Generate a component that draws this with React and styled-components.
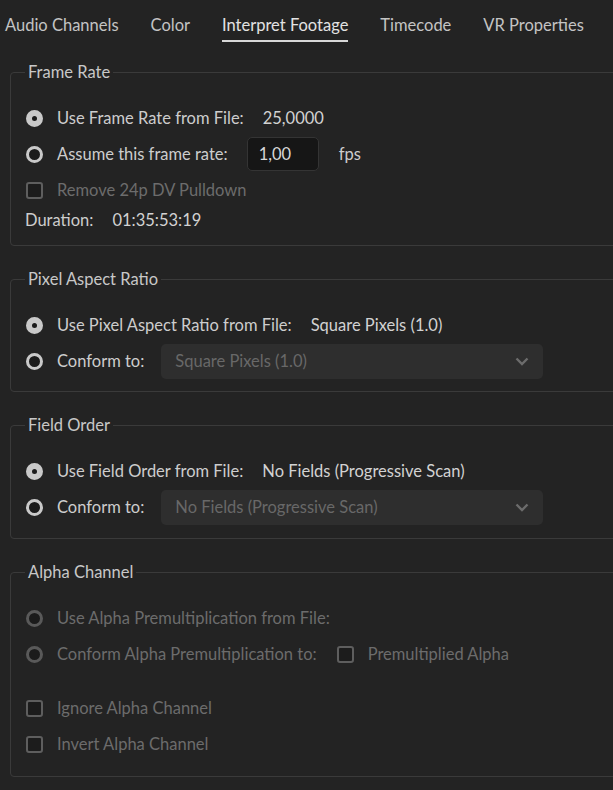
import React from "react";
import styled, { createGlobalStyle } from "styled-components";

const Global = createGlobalStyle`
  html, body { margin: 0; padding: 0; background: #232323; overflow: hidden; }
  body { font-family: Lato, "Noto Sans", sans-serif; font-size: 16.5px; color: #cdcdcd; }
  * { box-sizing: border-box; }
`;

const Page = styled.div`
  width: 613px;
  height: 790px;
  background: #232323;
  overflow: hidden;
`;

const TabBar = styled.nav`
  display: flex;
  gap: 32px;
  padding-left: 5px;
  height: 42px;
`;

const Tab = styled.div`
  padding-top: 15px;
  line-height: 20px;
  height: 42px;
  color: ${(p) => (p.$active ? "#e2e2e2" : "#c4c4c4")};
  border-bottom: 2px solid ${(p) => (p.$active ? "#d8d8d8" : "transparent")};
  white-space: nowrap;
`;

const Group = styled.fieldset`
  margin: ${(p) => (p.$first ? "20px" : "23px")} -20px 0 10px;
  padding: 18px 0 ${(p) => p.$pb || 13}px 14px;
  border: 1px solid #3a3a3a;
  border-radius: 4px;
  min-width: 0;
`;

const Legend = styled.legend`
  padding: 0 3px;
  line-height: 20px;
  color: #c8c8c8;
  margin-left: 0;
`;

const Row = styled.div`
  display: flex;
  align-items: center;
  height: ${(p) => p.$h || 36}px;
  margin-top: ${(p) => p.$mt || 0}px;
  gap: 19px;
  white-space: nowrap;
`;

const Option = styled.label`
  display: flex;
  align-items: center;
  gap: 14px;
  padding-left: 1px;
  color: ${(p) => (p.$disabled ? "#6c6c6c" : "#cdcdcd")};
`;

const Radio = styled.span`
  width: 17px;
  height: 17px;
  border-radius: 50%;
  flex: none;
  display: flex;
  align-items: center;
  justify-content: center;
  background: ${(p) => (p.$checked ? "#c9c9c9" : "#1b1b1b")};
  border: 3px solid ${(p) => (p.$disabled ? "#595959" : "#c9c9c9")};
  &::after {
    content: "";
    display: ${(p) => (p.$checked ? "block" : "none")};
    width: 5px;
    height: 5px;
    border-radius: 50%;
    background: #1b1b1b;
  }
`;

const Check = styled.span`
  width: 17px;
  height: 17px;
  flex: none;
  border-radius: 3px;
  border: 2px solid #5e5e5e;
  background: #1c1c1c;
`;

const Value = styled.span`
  color: #d2d2d2;
`;

const Plain = styled.span`
  color: #cdcdcd;
`;

const NumInput = styled.div`
  width: 72px;
  height: 34px;
  background: #161616;
  border: 1px solid #343434;
  border-radius: 5px;
  padding-left: 11px;
  display: flex;
  align-items: center;
  color: #d8d8d8;
`;

const Unit = styled.span`
  margin-left: 1px;
  color: #cdcdcd;
`;

const Select = styled.div`
  width: 382px;
  height: 35px;
  margin-left: -2px;
  background: #2e2e2e;
  border-radius: 5px;
  padding: 0 14px;
  display: flex;
  align-items: center;
  justify-content: space-between;
  color: #686868;
`;

const Inline = styled.label`
  display: flex;
  align-items: center;
  gap: 14px;
  margin-left: 1px;
  color: #6c6c6c;
`;

const Chevron = () => (
  <svg width="14" height="9" viewBox="0 0 14 9">
    <polyline points="1.5,1.5 7,7 12.5,1.5" fill="none" stroke="#6c6c6c" strokeWidth="2.4" />
  </svg>
);

export default function App() {
  return (
    <Page>
      <Global />
      <TabBar>
        <Tab>Audio Channels</Tab>
        <Tab>Color</Tab>
        <Tab $active>Interpret Footage</Tab>
        <Tab>Timecode</Tab>
        <Tab>VR Properties</Tab>
      </TabBar>

      <Group $first>
        <Legend>Frame Rate</Legend>
        <Row>
          <Option>
            <Radio $checked />
            Use Frame Rate from File:
          </Option>
          <Value>25,0000</Value>
        </Row>
        <Row>
          <Option>
            <Radio />
            Assume this frame rate:
          </Option>
          <NumInput>1,00</NumInput>
          <Unit>fps</Unit>
        </Row>
        <Row>
          <Option $disabled>
            <Check />
            Remove 24p DV Pulldown
          </Option>
        </Row>
        <Row $h={24}>
          <Plain>Duration:</Plain>
          <Value>01:35:53:19</Value>
        </Row>
      </Group>

      <Group $pb={12}>
        <Legend>Pixel Aspect Ratio</Legend>
        <Row>
          <Option>
            <Radio $checked />
            Use Pixel Aspect Ratio from File:
          </Option>
          <Value>Square Pixels (1.0)</Value>
        </Row>
        <Row>
          <Option>
            <Radio />
            Conform to:
          </Option>
          <Select>
            Square Pixels (1.0)
            <Chevron />
          </Select>
        </Row>
      </Group>

      <Group>
        <Legend>Field Order</Legend>
        <Row>
          <Option>
            <Radio $checked />
            Use Field Order from File:
          </Option>
          <Value>No Fields (Progressive Scan)</Value>
        </Row>
        <Row>
          <Option>
            <Radio />
            Conform to:
          </Option>
          <Select>
            No Fields (Progressive Scan)
            <Chevron />
          </Select>
        </Row>
      </Group>

      <Group $pb={14}>
        <Legend>Alpha Channel</Legend>
        <Row>
          <Option $disabled>
            <Radio $disabled />
            Use Alpha Premultiplication from File:
          </Option>
        </Row>
        <Row>
          <Option $disabled>
            <Radio $disabled />
            Conform Alpha Premultiplication to:
          </Option>
          <Inline>
            <Check />
            Premultiplied Alpha
          </Inline>
        </Row>
        <Row $mt={18}>
          <Option $disabled>
            <Check />
            Ignore Alpha Channel
          </Option>
        </Row>
        <Row>
          <Option $disabled>
            <Check />
            Invert Alpha Channel
          </Option>
        </Row>
      </Group>
    </Page>
  );
}
